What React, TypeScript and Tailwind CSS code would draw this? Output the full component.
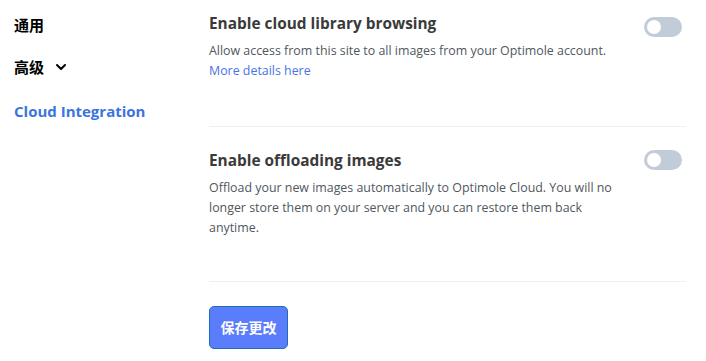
import { ChevronDown } from "lucide-react";

function Toggle() {
  return (
    <div className="flex h-[20px] w-[38px] shrink-0 items-center rounded-full bg-[#c2ccd9] px-[3px]">
      <div className="h-[14px] w-[14px] rounded-full bg-white" />
    </div>
  );
}

export default function App() {
  return (
    <div
      className="flex h-[361px] w-[706px] bg-white"
      style={{ fontFamily: '"Open Sans", "Noto Sans CJK SC", sans-serif' }}
    >
      {/* Sidebar */}
      <div className="flex w-[209px] shrink-0 flex-col pl-[14px] pt-[14px]">
        <div className="text-[15px] font-semibold leading-[22px] text-black">通用</div>
        <div className="mt-[20px] flex items-center gap-[9px] text-[15px] font-semibold leading-[22px] text-black">
          高级
          <ChevronDown className="h-[16px] w-[16px]" strokeWidth={3} />
        </div>
        <div className="mt-[22px] text-[15px] font-bold leading-[22px] text-[#3a74df]">
          Cloud Integration
        </div>
      </div>

      {/* Content */}
      <div className="flex w-[477px] flex-col pt-[12px]">
        <div className="flex items-start justify-between pr-[4px]">
          <div className="flex flex-col">
            <div className="text-[15.4px] font-bold leading-[24px] text-[#3a3a3a]">
              Enable cloud library browsing
            </div>
            <div className="mt-[5px] text-[12.4px] leading-[20px] text-[#50575e]">
              Allow access from this site to all images from your Optimole account.
            </div>
            <a className="text-[12.4px] leading-[20px] text-[#4a72e6]">More details here</a>
          </div>
          <div className="pt-[5px]">
            <Toggle />
          </div>
        </div>

        <div className="mt-[45px] h-[1px] bg-[#f0f0f1]" />

        <div className="mt-[22px] flex items-start justify-between pr-[4px]">
          <div className="flex w-[412px] flex-col">
            <div className="text-[15.4px] font-bold leading-[24px] text-[#3a3a3a]">
              Enable offloading images
            </div>
            <div className="mt-[5px] text-[12.4px] leading-[20px] text-[#50575e]">
              Offload your new images automatically to Optimole Cloud. You will no longer store them on your server and you can restore them back anytime.
            </div>
          </div>
          <div className="pt-[1px]">
            <Toggle />
          </div>
        </div>

        <div className="mt-[43px] h-[1px] bg-[#f0f0f1]" />

        <div className="mt-[24px]">
          <button className="h-[43px] w-[79px] rounded-[5px] border border-[#1d6fb3] bg-[#5a7dfc] text-[14px] font-bold text-white">
            保存更改
          </button>
        </div>
      </div>
    </div>
  );
}
